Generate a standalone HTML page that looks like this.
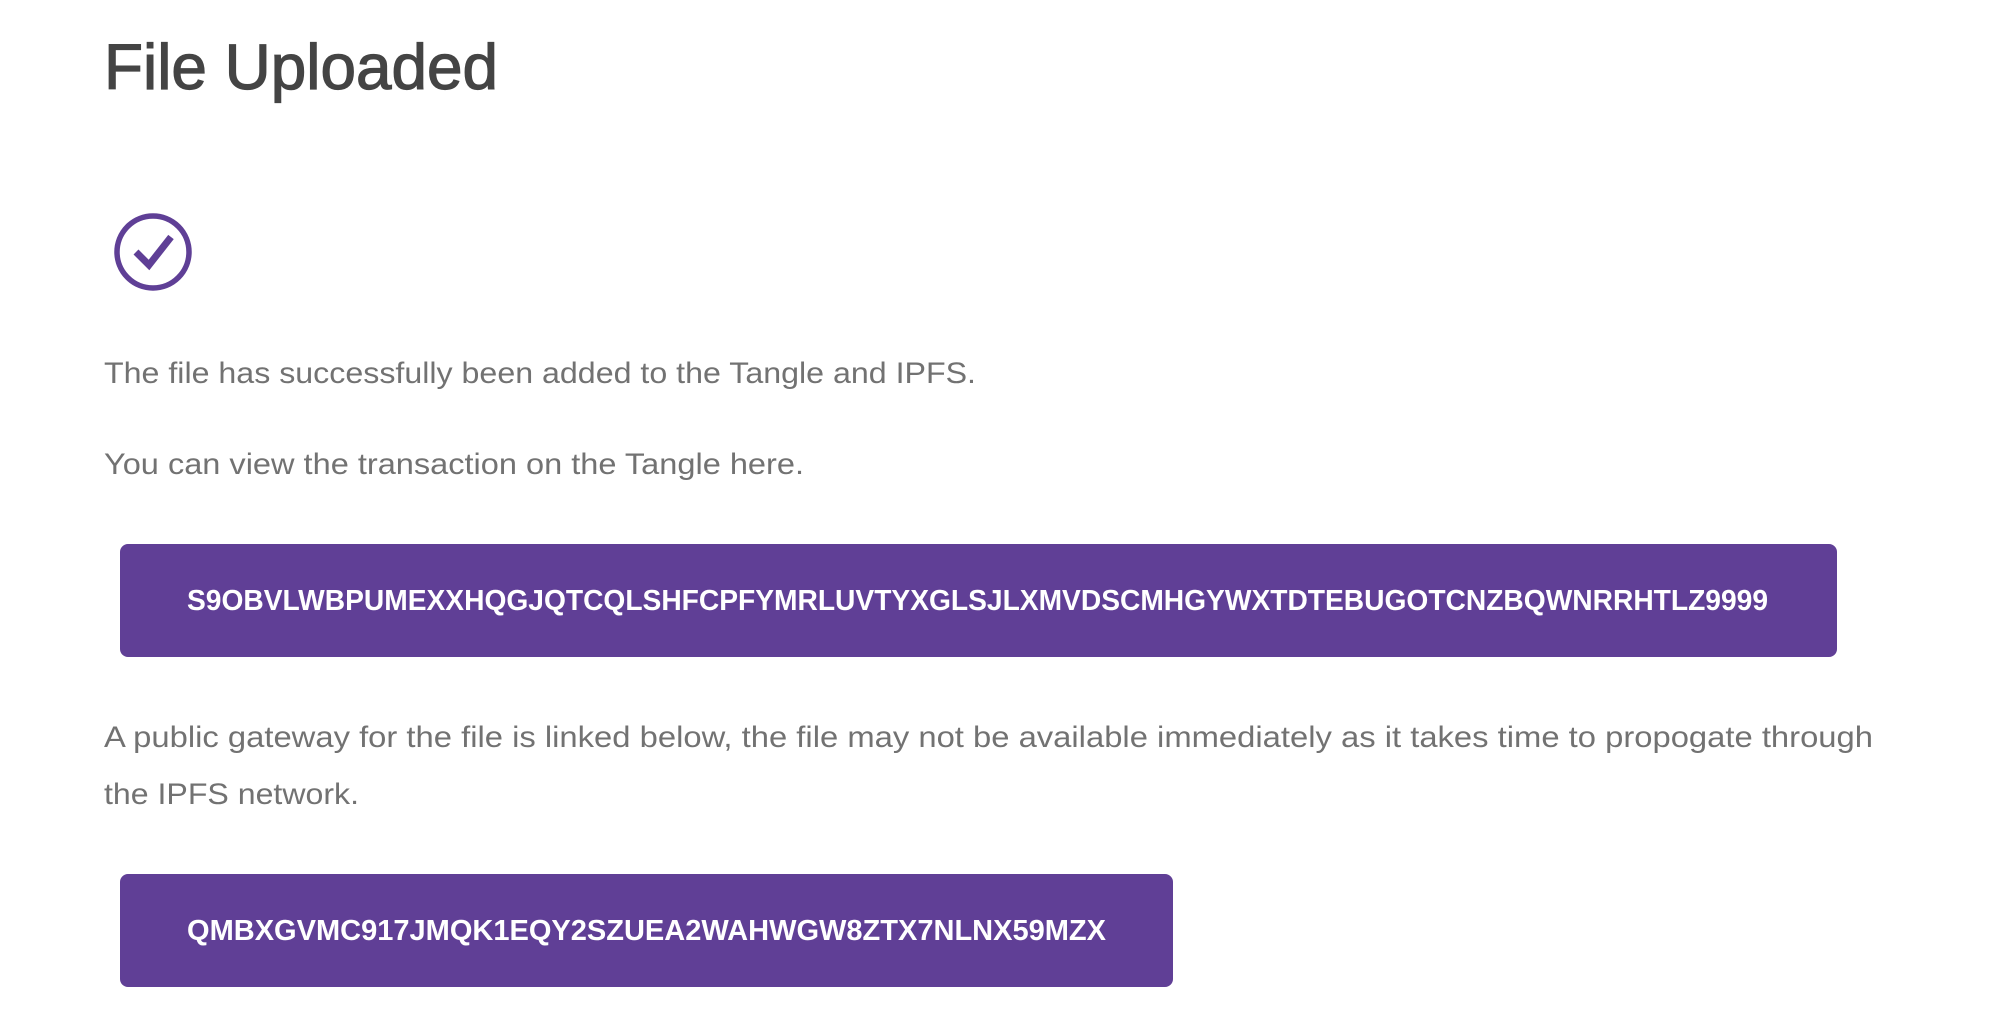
<!DOCTYPE html>
<html><head><meta charset="utf-8"><style>
html,body{margin:0;padding:0;background:#fff;width:1998px;height:1013px;overflow:hidden}
svg{position:absolute;left:0;top:0}
</style></head><body>
<svg width="1998" height="1013" viewBox="0 0 1998 1013" xmlns="http://www.w3.org/2000/svg">
<text x="104" y="89" font-family="Liberation Sans, sans-serif" font-size="64" fill="#444" stroke="#444" stroke-width="1.2" textLength="394" lengthAdjust="spacingAndGlyphs">File Uploaded</text>
<circle cx="153" cy="252" r="36" fill="none" stroke="#5f3f96" stroke-width="5.5"/>
<path d="M136 252 L149 265 L171 237" fill="none" stroke="#5f3f96" stroke-width="7" stroke-linecap="butt" stroke-linejoin="miter"/>
<g font-family="Liberation Sans, sans-serif" font-size="30" fill="#727272">
<text x="104" y="383" textLength="872" lengthAdjust="spacingAndGlyphs">The file has successfully been added to the Tangle and IPFS.</text>
<text x="104" y="474" textLength="700" lengthAdjust="spacingAndGlyphs">You can view the transaction on the Tangle here.</text>
<text x="104" y="747" textLength="1769" lengthAdjust="spacingAndGlyphs">A public gateway for the file is linked below, the file may not be available immediately as it takes time to propogate through</text>
<text x="104" y="804" textLength="255" lengthAdjust="spacingAndGlyphs">the IPFS network.</text>
</g>
<rect x="120" y="544" width="1717" height="113" rx="8" fill="#603f96"/>
<rect x="120" y="874" width="1053" height="113" rx="8" fill="#603f96"/>
<g font-family="Liberation Sans, sans-serif" font-size="29" font-weight="bold" fill="#fff">
<text x="187" y="610" textLength="1581" lengthAdjust="spacingAndGlyphs">S9OBVLWBPUMEXXHQGJQTCQLSHFCPFYMRLUVTYXGLSJLXMVDSCMHGYWXTDTEBUGOTCNZBQWNRRHTLZ9999</text>
<text x="187" y="940" textLength="919" lengthAdjust="spacingAndGlyphs">QMBXGVMC917JMQK1EQY2SZUEA2WAHWGW8ZTX7NLNX59MZX</text>
</g>
</svg>
</body></html>
